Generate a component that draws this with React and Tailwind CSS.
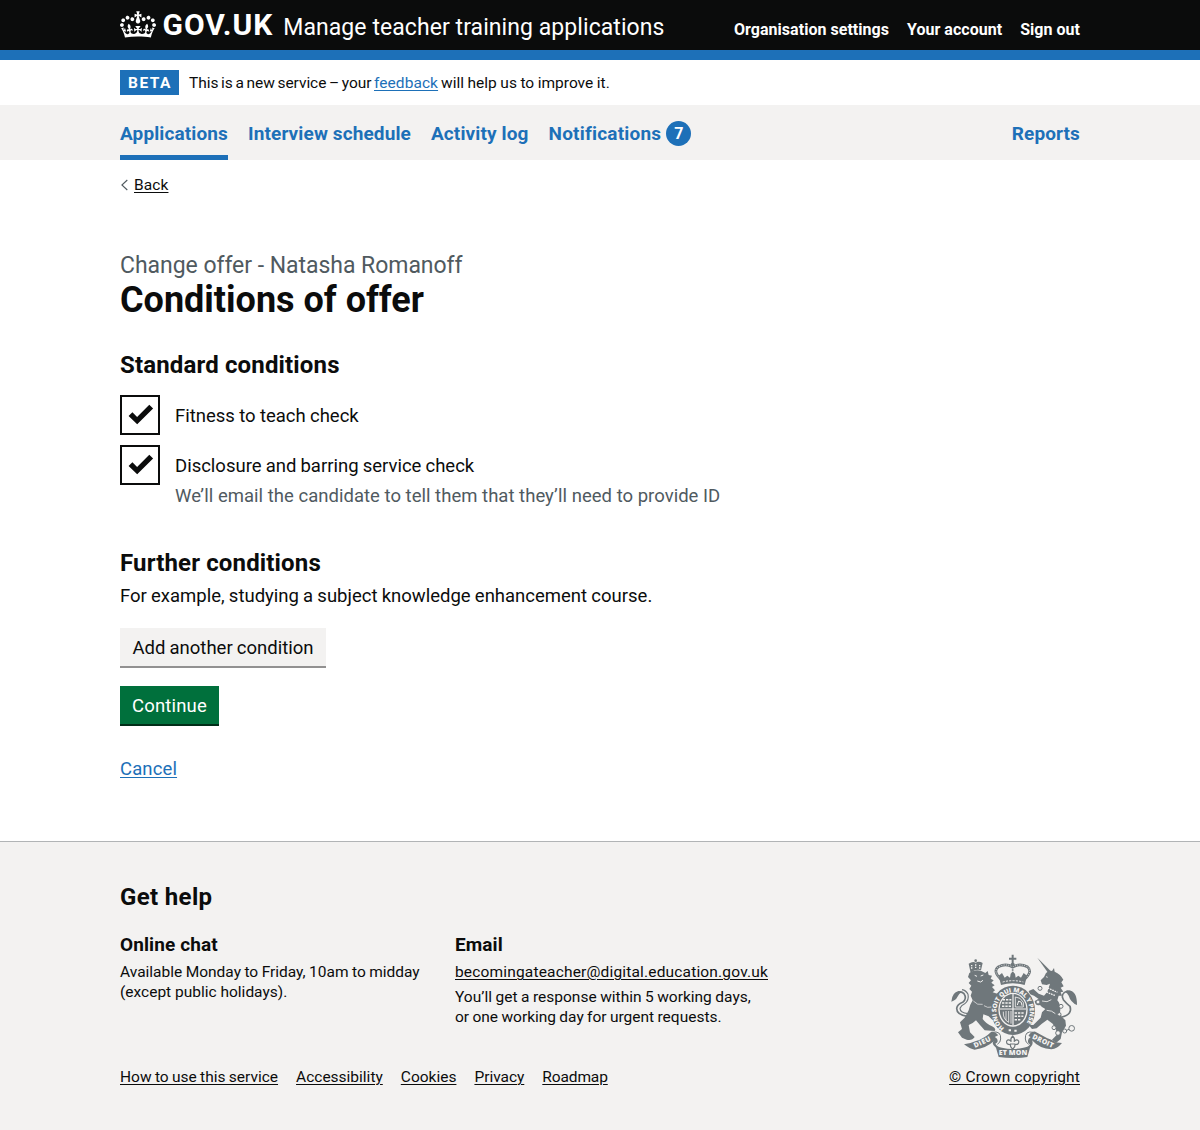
import React from "react";

function Crown() {
  return (
    <svg className="block h-[27px] w-9" viewBox="0 0 132 97" fill="currentColor" aria-hidden="true">
      <path
        fillRule="evenodd"
        d="M25 30.2c3.5 1.5 7.7-.2 9.1-3.7 1.5-3.6-.2-7.8-3.9-9.2-3.6-1.4-7.6.3-9.1 3.9-1.4 3.5.3 7.5 3.9 9zM9 39.5c3.6 1.5 7.8-.2 9.2-3.7 1.5-3.6-.2-7.8-3.9-9.1-3.6-1.5-7.6.2-9.1 3.8-1.4 3.5.3 7.5 3.8 9zM4.4 57.2c3.5 1.5 7.7-.2 9.1-3.8 1.5-3.6-.2-7.7-3.9-9.1-3.5-1.5-7.6.3-9.1 3.8-1.4 3.5.3 7.6 3.9 9.1zm38.3-21.4c3.5 1.5 7.7-.2 9.1-3.8 1.5-3.6-.2-7.7-3.9-9.1-3.6-1.5-7.6.3-9.1 3.8-1.3 3.6.4 7.7 3.9 9.1zm64.4-5.6c-3.6 1.5-7.8-.2-9.1-3.7-1.5-3.6.2-7.8 3.8-9.2 3.6-1.4 7.7.3 9.2 3.9 1.3 3.5-.4 7.5-3.9 9zm15.9 9.3c-3.6 1.5-7.7-.2-9.1-3.7-1.5-3.6.2-7.8 3.7-9.1 3.6-1.5 7.7.2 9.2 3.8 1.5 3.5-.3 7.5-3.8 9zm4.7 17.7c-3.6 1.5-7.8-.2-9.2-3.8-1.5-3.6.2-7.7 3.9-9.1 3.6-1.5 7.7.3 9.2 3.8 1.3 3.5-.4 7.6-3.9 9.1zM89.3 35.8c-3.6 1.5-7.8-.2-9.2-3.8-1.4-3.6.2-7.7 3.9-9.1 3.6-1.5 7.7.3 9.2 3.8 1.4 3.6-.3 7.7-3.9 9.1zM69.7 17.7l8.9 4.7V9.3l-8.9 2.8c-.2-.3-.5-.6-.9-.9L72.4 0H59.6l3.5 11.2c-.3.3-.6.5-.9.9l-8.8-2.8v13.1l8.8-4.7c.3.3.6.7.9.9l-5 15.4v.1c-.2.8-.4 1.6-.4 2.4 0 4.1 3.1 7.5 7 8.1h.2c.3 0 .7.1 1 .1.4 0 .7 0 1-.1h.2c4-.6 7.1-4.1 7.1-8.1 0-.8-.1-1.7-.4-2.4V34l-5.1-15.4c.4-.2.7-.6 1-.9zM66 92.8c16.9 0 32.8 1.1 47.1 3.2 4-16.9 8.9-26.7 14-33.5l-9.6-3.4c1 4.9 1.1 7.2 0 10.2-1.5-1.4-3-4.3-4.2-8.7L108.6 76c2.8-2 5-3.2 7.5-3.3-4.4 9.4-10 11.9-13.6 11.2-4.3-.8-6.3-4.6-5.6-7.9 1-4.7 5.7-5.9 8-.5 4.3-8.7-3-11.4-7.6-8.8 7.1-7.2 7.9-13.5 2.1-21.1-8 6.1-8.1 12.3-4.5 20.8-4.7-5.4-12.1-2.5-9.5 6.2 3.4-5.2 7.9-2 7.2 3.1-.6 4.3-6.4 7.8-13.5 7.2-10.3-.9-10.9-8-11.2-13.8 2.5-.5 7.1 1.8 11 7.3L80.2 60c-4.1 4.4-8 5.3-12.3 5.4 1.4-4.4 8-11.6 8-11.6H55.5s6.4 7.2 7.9 11.6c-4.2-.1-8-1-12.3-5.4l1.4 16.4c3.9-5.5 8.5-7.7 10.9-7.3-.3 5.8-.9 12.8-11.1 13.8-7.2.6-12.9-2.9-13.5-7.2-.7-5 3.8-8.3 7.1-3.1 2.7-8.7-4.6-11.6-9.4-6.2 3.7-8.5 3.6-14.7-4.6-20.8-5.8 7.6-5 13.9 2.2 21.1-4.7-2.6-11.9.1-7.7 8.8 2.3-5.5 7.1-4.2 8.1.5.7 3.3-1.3 7.1-5.7 7.9-3.5.7-9-1.8-13.5-11.2 2.5.1 4.7 1.3 7.5 3.3l-4.7-15.4c-1.2 4.4-2.7 7.2-4.3 8.7-1.1-3-.9-5.3 0-10.2l-9.5 3.4c5 6.9 9.9 16.7 14 33.5 14.8-2.1 30.8-3.2 47.7-3.2z"
      />
    </svg>
  );
}

function RoyalArms() {
  return (
    <svg className="block h-[106px] w-[128px] text-[#6f777b]" viewBox="30 24 384 318" fill="none" aria-hidden="true">
      {/* lion */}
      <g fill="currentColor">
        <path d="M92 84 L86 56 Q98 48 107 53 Q117 47 128 54 L123 76 Q106 71 92 84 Z" />
        <circle cx="107" cy="47" r="4" />
        <path d="M88 84 Q104 72 124 78 L136 84 L143 78 L146 90 L156 92 L152 101 L161 106 L154 113 L164 121 L156 126 L165 136 L158 142 L172 146 L182 134 L180 152 L165 168 L156 190 L158 226 L146 214 L130 208 L128 222 Q140 238 156 244 Q170 250 164 258 L134 256 L118 238 L108 226 L98 234 L86 240 L90 262 L104 276 Q96 288 80 284 L66 278 L54 262 L66 252 L60 232 L74 218 L86 196 Q90 178 98 166 L92 152 L96 140 L88 132 L94 122 L86 114 L93 106 L84 96 Z" />
      </g>
      <path d="M95 60 v12 M107 58 v13 M119 60 v12" stroke="#f3f2f1" strokeWidth="4" strokeDasharray="4 3" />
      <path d="M104 91 l7 3 M122 93 l8 -3 M112 108 l10 3 l7 -5" stroke="#f3f2f1" strokeWidth="3" />
      <path d="M100 168 Q112 182 128 178 M132 182 Q142 190 156 186" stroke="#f3f2f1" strokeWidth="2" />
      <path d="M82 214 Q50 210 50 190 Q52 178 68 172 Q82 160 72 146 Q64 138 54 142" stroke="currentColor" strokeWidth="5" />
      <path d="M34 170 Q36 142 56 138 L66 140 Q56 146 52 156 Q48 166 34 170 Z" fill="currentColor" />
      <path d="M84 206 Q60 204 60 190 Q64 180 74 176 Q88 166 84 148 Q78 136 66 134" stroke="currentColor" strokeWidth="3.5" />

      {/* imperial crown */}
      <path d="M218 29 v25 M207 41 h22" stroke="currentColor" strokeWidth="6" />
      <circle cx="218" cy="60" r="6.5" fill="currentColor" />
      <path d="M184 104 Q156 78 176 65 Q198 54 218 66 Q238 54 262 65 Q280 80 252 104" stroke="currentColor" strokeWidth="8" />
      <path d="M184 104 Q156 78 176 65 Q198 54 218 66 Q238 54 262 65 Q280 80 252 104" stroke="#f3f2f1" strokeWidth="3" strokeLinecap="round" strokeDasharray="0.1 7" />
      <path d="M218 66 v20" stroke="currentColor" strokeWidth="5" strokeDasharray="4 3" />
      <path d="M176 92 L186 84 L194 98 L202 92 L210 98 L212 86 L218 80 L225 86 L227 98 L235 92 L243 98 L251 84 L261 92 L254 120 Q218 110 183 120 Z" fill="currentColor" />
      <path d="M188 111 Q218 103 250 111" stroke="#f3f2f1" strokeWidth="3" strokeDasharray="6 4" />

      {/* unicorn */}
      <path d="M292 38 L332 78 L324 83 Z" fill="currentColor" />
      <g fill="currentColor">
        <path d="M318 84 Q328 76 336 78 L342 69 L344 80 Q362 88 370 104 L364 112 L371 124 L362 128 L370 140 L362 142 L366 152 L356 152 L352 166 Q364 180 360 202 L366 216 L376 226 L378 242 L366 262 L362 282 L348 294 L336 284 L350 270 L348 252 L338 236 L322 224 Q304 236 290 250 L276 252 L266 240 L280 240 L302 218 L306 202 L316 192 Q306 188 300 180 Q286 184 284 168 L296 162 L282 152 Q268 150 266 138 L280 132 L296 146 L312 152 L322 140 L330 116 L320 120 L306 118 L302 106 L312 96 Z" />
      </g>
      <path d="M309 124 L330 132 L352 142 M306 134 L326 144 L346 152" stroke="#f3f2f1" strokeWidth="4" strokeDasharray="5 2.5" />
      <path d="M318 95 l5 2 M306 168 Q322 174 334 164 M320 196 Q336 196 346 206" stroke="#f3f2f1" strokeWidth="2.5" />
      <path d="M366 216 Q398 208 390 184 Q380 176 370 164 Q360 146 382 138 Q398 138 404 152" stroke="currentColor" strokeWidth="5" />
      <path d="M411 180 Q392 172 386 152 Q382 144 376 142 Q392 130 406 150 Q411 160 411 180 Z" fill="currentColor" />
      <g stroke="currentColor" strokeWidth="3">
        <circle cx="300" cy="130" r="6" fill="#f3f2f1" />
        <circle cx="294" cy="171" r="6" fill="#f3f2f1" />
        <circle cx="363" cy="184" r="6" fill="#f3f2f1" />
        <circle cx="358" cy="208" r="5" fill="#f3f2f1" />
        <circle cx="342" cy="248" r="6" fill="#f3f2f1" />
        <circle cx="354" cy="264" r="7" fill="#f3f2f1" />
        <circle cx="374" cy="258" r="6" fill="#f3f2f1" />
        <circle cx="395" cy="250" r="8.5" />
        <path d="M380 256 L387 253" />
      </g>

      {/* garter and shield */}
      <ellipse cx="219" cy="196" rx="66" ry="74" fill="currentColor" />
      <ellipse cx="219" cy="194" rx="44" ry="51" fill="#f3f2f1" />
      <ellipse cx="219" cy="194" rx="40" ry="47" fill="currentColor" />
      <path d="M219 147 V241 M180 192 H258" stroke="#f3f2f1" strokeWidth="3.5" />
      <path d="M188 164 h26 M186 174 h28 M186 184 h28 M224 204 h30 M224 214 h26 M224 224 h20" stroke="#f3f2f1" strokeWidth="4.5" strokeDasharray="7 3" />
      <path d="M226 156 l14 4 l10 12 v14 h-24 z" stroke="#f3f2f1" strokeWidth="2.5" />
      <path d="M232 180 l4 -12 l8 4 l2 10" stroke="#f3f2f1" strokeWidth="3" />
      <path d="M190 200 Q188 222 206 232 M198 198 V226 M206 198 V232 M213 198 V236" stroke="#f3f2f1" strokeWidth="2.5" />
      <path id="garter" d="M193 249 A 50 58 0 1 1 248 247" />
      <text className="font-['Open_Sans'] text-[19px] font-extrabold" fill="#f3f2f1">
        <textPath href="#garter" textLength="262" lengthAdjust="spacing">HONI SOIT QUI MAL Y PENSE</textPath>
      </text>
      <path d="M206 256 h7 M223 257 h7" stroke="#f3f2f1" strokeWidth="6" />

      {/* motto ribbon */}
      <path d="M72 298 Q90 312 104 314 Q138 310 162 288 Q152 296 168 308 L176 336 Q218 342 262 336 L270 308 Q282 298 276 286 Q300 312 334 313 Q352 311 366 294 L346 292 Q340 286 322 280 L286 260 Q270 258 262 280 Q258 292 270 298 Q264 308 250 308 Q218 316 186 308 Q172 306 166 296 Q180 290 178 276 Q170 260 154 260 Q134 280 108 288 Q90 296 72 298 Z" fill="currentColor" />
      <path d="M164 276 Q178 282 170 300 L184 304 Q192 284 176 270 Z M272 276 Q258 284 268 300 L254 304 Q244 286 260 270 Z" fill="#f3f2f1" />
      <path d="M156 262 Q184 256 182 282 Q182 292 172 298 M280 262 Q254 256 256 282 Q256 292 266 298" stroke="currentColor" strokeWidth="3" />
      <g fill="#f3f2f1" className="font-['Open_Sans'] font-extrabold">
        <text className="text-[21px]" transform="translate(105 309) rotate(-25)" textLength="54">DIEU</text>
        <text className="text-[21px]" transform="translate(176 331)" textLength="86">ET MON</text>
        <text className="text-[21px]" transform="translate(275 280) rotate(25)" textLength="68">DROIT</text>
      </g>
      <path d="M218 273 Q226 281 222 290 Q230 280 236 288 Q238 299 225 299 L224 305 L218 313 L212 305 L211 299 Q198 299 200 288 Q206 280 214 290 Q210 281 218 273 Z" fill="#f3f2f1" stroke="currentColor" strokeWidth="3.5" />
      <path d="M210 297 h16" stroke="currentColor" strokeWidth="3" />
    </svg>
  );
}

function Checkbox() {
  return (
    <span className="block size-10 shrink-0 border-2 border-[#0b0c0c] bg-white">
      <svg className="block size-9" viewBox="2 2 36 36" fill="#0b0c0c">
        <path d="M8.6 21 L12.4 17.2 L17.1 22 L29.3 9.8 L33.1 13.6 L17.2 29.3 Z" />
      </svg>
    </span>
  );
}

const footerLinks = [
  ["How to use this service", "[word-spacing:-0.5px]"],
  ["Accessibility", "tracking-normal"],
  ["Cookies", "tracking-normal"],
  ["Privacy", "tracking-[-0.03px]"],
  ["Roadmap", "tracking-[-0.12px]"],
];

export default function App() {
  return (
    <div className="flex h-[1130px] flex-col overflow-hidden bg-white font-['Roboto',sans-serif] text-[#0b0c0c]">
      <header className="h-[60px] border-b-[10px] border-[#1d70b8] bg-[#0b0c0c] text-white">
        <div className="mx-auto flex h-[50px] w-[960px] items-start whitespace-nowrap">
          <div className="pt-[10.5px]"><Crown /></div>
          <span className="ml-[6.5px] mt-[7px] text-[30px] font-bold leading-9 tracking-[1px]">GOV.UK</span>
          <span className="ml-[10px] mt-[13px] text-[23px] leading-[30px] tracking-[0.07px]">Manage teacher training applications</span>
          <nav className="ml-auto mt-5 flex gap-[18px] text-[16px] font-bold leading-5 tracking-[0.03px]">
            <a>Organisation settings</a>
            <a>Your account</a>
            <a>Sign out</a>
          </nav>
        </div>
      </header>

      <div className="mx-auto flex h-[45px] w-[960px] items-center text-[15.5px] leading-5">
        <strong className="mr-[10px] flex h-[25px] w-[59px] items-center justify-center bg-[#1d70b8] pl-[1px] tracking-[1.5px] text-white">BETA</strong>
        <span className="tracking-[-0.05px] [word-spacing:-1.1px]">This is a new service – your</span>
        <a className="ml-[2.5px] tracking-[0.07px] text-[#1d70b8] underline decoration-1 underline-offset-2">feedback</a>
        <span className="ml-[3px] [word-spacing:-0.3px]">will help us to improve it.</span>
      </div>

      <div className="bg-[#f3f2f1]">
        <nav className="mx-auto flex h-[55px] w-[960px] gap-5 whitespace-nowrap text-[19px] font-bold leading-[25px] tracking-[0.12px] text-[#1d70b8]">
          <a className="border-b-[5px] border-[#1d70b8] pt-[15.5px]">Applications</a>
          <a className="pt-[15.5px]">Interview schedule</a>
          <a className="pt-[15.5px]">Activity log</a>
          <a className="flex items-start gap-[5px] pt-[15.5px] tracking-[0.21px]">
            Notifications
            <span className="flex size-[25px] items-center justify-center rounded-full bg-[#1d70b8] text-[16px] tracking-normal text-white">7</span>
          </a>
          <a className="ml-auto pt-[15.5px]">Reports</a>
        </nav>
      </div>

      <main className="mx-auto w-[960px] flex-1">
        <a className="mt-[15px] flex h-5 items-center text-[15.5px] leading-5 tracking-[0.1px]">
          <svg className="mr-[6px] h-3 w-2" viewBox="0 0 8 12" fill="none" stroke="#505a5f" strokeWidth="1.1">
            <path d="M7.3 1 L1.9 6 L7.3 11" />
          </svg>
          <span className="underline decoration-1 underline-offset-2">Back</span>
        </a>

        <h1 className="mt-[56px]">
          <span className="block text-[23px] leading-[30px] tracking-[-0.04px] text-[#505a5f]">Change offer - Natasha Romanoff</span>
          <span className="-mt-px block text-[36px] font-bold leading-10">Conditions of offer</span>
        </h1>

        <h2 className="mt-[30px] text-[24px] font-bold leading-[30px] tracking-[0.15px]">Standard conditions</h2>
        <div className="mt-[15px] flex flex-col gap-[10px] text-[18.5px] leading-[25px]">
          <label className="flex h-10 gap-[15px]">
            <Checkbox />
            <span className="pt-[9px] [word-spacing:-0.3px]">Fitness to teach check</span>
          </label>
          <label className="flex h-[63px] gap-[15px]">
            <Checkbox />
            <span className="pt-[9px]">
              <span className="block [word-spacing:-0.5px]">Disclosure and barring service check</span>
              <span className="mt-[5px] block tracking-[0.02px] text-[#505a5f]">We’ll email the candidate to tell them that they’ll need to provide ID</span>
            </span>
          </label>
        </div>

        <h2 className="mt-[40px] text-[24px] font-bold leading-[30px] tracking-[0.15px]">Further conditions</h2>
        <p className="mt-[6px] text-[18.5px] leading-[25px] [word-spacing:-0.4px]">For example, studying a subject knowledge enhancement course.</p>

        <button className="mt-[19px] block h-[38px] w-[206px] bg-[#f3f2f1] pt-[3px] text-[18.5px] leading-[19px] [word-spacing:-0.4px] shadow-[0_2px_0_#929191]">Add another condition</button>
        <button className="mt-5 block h-[38px] w-[99px] bg-[#00703c] pt-[3px] text-[18.5px] leading-[19px] tracking-[0.15px] text-white shadow-[0_2px_0_#002d18]">Continue</button>
        <a className="mt-[33px] block w-fit text-[18.5px] leading-[25px] tracking-[0.12px] text-[#1d70b8] underline decoration-1 underline-offset-2">Cancel</a>
      </main>

      <footer className="h-[289px] border-t border-[#b1b4b6] bg-[#f3f2f1]">
        <div className="mx-auto w-[960px] pt-[40px]">
          <h2 className="text-[24px] font-bold leading-[30px] tracking-[0.35px]">Get help</h2>
          <div className="mt-5 flex h-[135px] items-start text-[15.5px] leading-5">
            <section className="w-[335px]">
              <h3 className="text-[19px] font-bold leading-[25px] tracking-[0.1px]">Online chat</h3>
              <p className="mt-[5px] [word-spacing:-0.4px]">Available Monday to Friday, 10am to midday</p>
              <p>(except public holidays).</p>
            </section>
            <section>
              <h3 className="text-[19px] font-bold leading-[25px] tracking-[0.1px]">Email</h3>
              <a className="mt-[5px] block tracking-[0.17px] underline decoration-1 underline-offset-2">becomingateacher@digital.education.gov.uk</a>
              <p className="mt-[5px] [word-spacing:-0.35px]">You’ll get a response within 5 working days,</p>
              <p className="[word-spacing:-0.5px]">or one working day for urgent requests.</p>
            </section>
            <div className="ml-auto mr-[2px] mt-[21px]"><RoyalArms /></div>
          </div>
          <div className="flex h-5 whitespace-nowrap text-[15.5px] leading-5">
            <nav className="flex gap-[18px]">
              {footerLinks.map(([label, spacing]) => (
                <a key={label} className={`underline decoration-1 underline-offset-2 ${spacing}`}>{label}</a>
              ))}
            </nav>
            <a className="ml-auto tracking-[0.15px] underline decoration-1 underline-offset-2">© Crown copyright</a>
          </div>
        </div>
      </footer>
    </div>
  );
}
